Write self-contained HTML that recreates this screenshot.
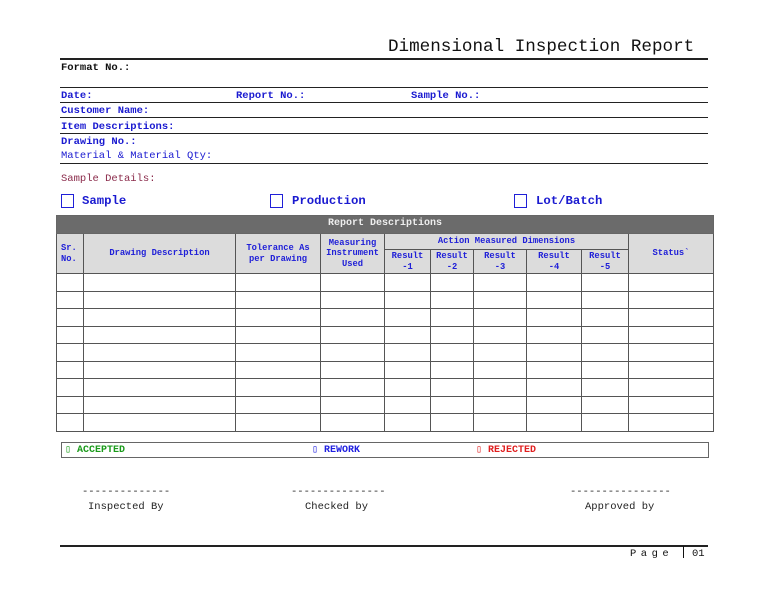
<!DOCTYPE html>
<html><head><meta charset="utf-8"><style>
body{margin:0;width:768px;height:594px;background:#fff;position:relative;overflow:hidden;font-family:"Liberation Mono","DejaVu Sans Mono",monospace;}
.a{position:absolute;white-space:nowrap;}
.t{font-size:10.5px;font-weight:bold;color:#1a1ad0;}
.hl{position:absolute;left:60px;width:648px;height:1px;background:#222;}
table{position:absolute;left:56px;top:215px;border-collapse:collapse;table-layout:fixed;width:657px;}
td{border:1px solid #555;padding:0;font-size:8.8px;font-weight:bold;color:#2020d8;text-align:center;line-height:10.5px;}
.hd td{background:#dcdcdc;}
.bar td{background:#6b6b6b;color:#eee;font-size:10px;height:17px;border-color:#666;}
.r td{height:16.5px;}
.cb{position:absolute;width:11px;height:12px;border:1.3px solid #2020d8;}
</style></head><body>
<div class="a" style="left:388px;top:37px;font-size:17.6px;color:#111;">Dimensional Inspection Report</div>
<div class="hl" style="top:58px;height:1.5px"></div>
<div class="a t" style="left:61px;top:62px;color:#111;">Format No.:</div>
<div class="hl" style="top:87px"></div>
<div class="a t" style="left:61px;top:90px">Date:</div>
<div class="a t" style="left:236px;top:90px">Report No.:</div>
<div class="a t" style="left:411px;top:90px">Sample No.:</div>
<div class="hl" style="top:102px"></div>
<div class="a t" style="left:61px;top:105px">Customer Name:</div>
<div class="hl" style="top:117px"></div>
<div class="a t" style="left:61px;top:121px">Item Descriptions:</div>
<div class="hl" style="top:133px"></div>
<div class="a t" style="left:61px;top:136px">Drawing No.:</div>
<div class="a t" style="left:61px;top:150px;font-weight:normal">Material &amp; Material Qty:</div>
<div class="hl" style="top:163px"></div>
<div class="a t" style="left:61px;top:173px;color:#8a2a4a;font-weight:normal">Sample Details:</div>
<div class="cb" style="left:61px;top:194px"></div>
<div class="a t" style="left:82px;top:194px;font-size:12.3px">Sample</div>
<div class="cb" style="left:270px;top:194px"></div>
<div class="a t" style="left:292px;top:194px;font-size:12.3px">Production</div>
<div class="cb" style="left:514px;top:194px"></div>
<div class="a t" style="left:536px;top:194px;font-size:12.3px">Lot/Batch</div>
<table>
<colgroup><col style="width:27px"><col style="width:152px"><col style="width:85px"><col style="width:64px"><col style="width:46px"><col style="width:43px"><col style="width:53px"><col style="width:55px"><col style="width:47px"><col style="width:85px"></colgroup>
<tr class="bar"><td colspan="10">Report Descriptions</td></tr>
<tr class="hd"><td rowspan="2" style="text-align:left;padding-left:4px">Sr.<br>No.</td><td rowspan="2">Drawing Description</td><td rowspan="2">Tolerance As<br>per Drawing</td><td rowspan="2">Measuring<br>Instrument<br>Used</td><td colspan="5" style="height:15px">Action Measured Dimensions</td><td rowspan="2">Status`</td></tr>
<tr class="hd"><td style="height:23px">Result<br>-1</td><td>Result<br>-2</td><td>Result<br>-3</td><td>Result<br>-4</td><td>Result<br>-5</td></tr>
<tr class="r"><td></td><td></td><td></td><td></td><td></td><td></td><td></td><td></td><td></td><td></td></tr>
<tr class="r"><td></td><td></td><td></td><td></td><td></td><td></td><td></td><td></td><td></td><td></td></tr>
<tr class="r"><td></td><td></td><td></td><td></td><td></td><td></td><td></td><td></td><td></td><td></td></tr>
<tr class="r"><td></td><td></td><td></td><td></td><td></td><td></td><td></td><td></td><td></td><td></td></tr>
<tr class="r"><td></td><td></td><td></td><td></td><td></td><td></td><td></td><td></td><td></td><td></td></tr>
<tr class="r"><td></td><td></td><td></td><td></td><td></td><td></td><td></td><td></td><td></td><td></td></tr>
<tr class="r"><td></td><td></td><td></td><td></td><td></td><td></td><td></td><td></td><td></td><td></td></tr>
<tr class="r"><td></td><td></td><td></td><td></td><td></td><td></td><td></td><td></td><td></td><td></td></tr>
<tr class="r"><td></td><td></td><td></td><td></td><td></td><td></td><td></td><td></td><td></td><td></td></tr>
</table>
<div class="a" style="left:61px;top:442px;width:646px;height:14px;border:1px solid #666;"></div>
<div class="a" style="left:65px;top:444px;font-size:10px;font-weight:bold;color:#1a9a1a">▯ ACCEPTED</div>
<div class="a" style="left:312px;top:444px;font-size:10px;font-weight:bold;color:#2020e0">▯ REWORK</div>
<div class="a" style="left:476px;top:444px;font-size:10px;font-weight:bold;color:#e02020">▯ REJECTED</div>
<div class="a" style="left:82px;top:486px;font-size:10.5px;color:#222">--------------</div>
<div class="a" style="left:88px;top:501px;font-size:10.5px;color:#222">Inspected By</div>
<div class="a" style="left:291px;top:486px;font-size:10.5px;color:#222">---------------</div>
<div class="a" style="left:305px;top:501px;font-size:10.5px;color:#222">Checked by</div>
<div class="a" style="left:570px;top:486px;font-size:10.5px;color:#222">----------------</div>
<div class="a" style="left:585px;top:501px;font-size:10.5px;color:#222">Approved by</div>
<div class="hl" style="top:545px;height:1.5px"></div>
<div class="a" style="left:630px;top:548px;font-size:10.5px;color:#111;letter-spacing:4.5px">Page</div>
<div class="a" style="left:683px;top:546px;width:1px;height:12px;background:#111"></div>
<div class="a" style="left:692px;top:548px;font-size:10.5px;color:#111">01</div>
</body></html>
